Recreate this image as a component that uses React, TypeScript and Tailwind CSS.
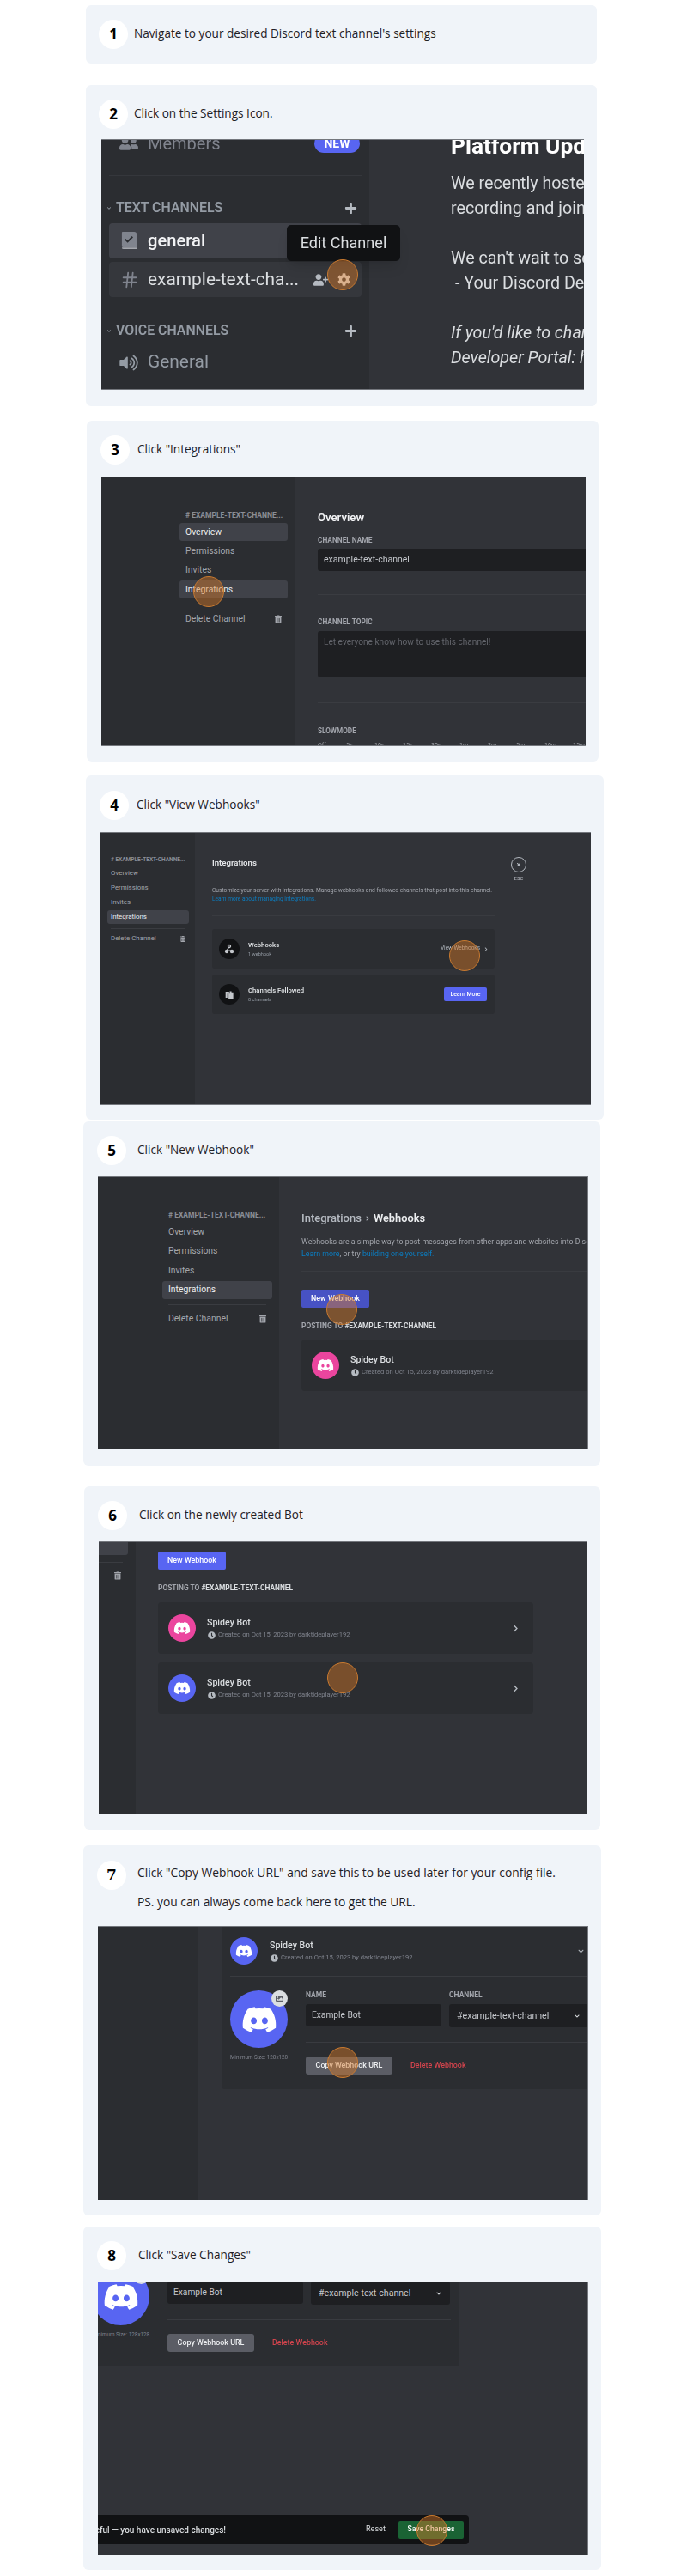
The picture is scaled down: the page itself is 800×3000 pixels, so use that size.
import React from "react";
import { Hash } from "lucide-react";
import { FaDiscord, FaTrashAlt, FaClock, FaCog, FaUserPlus, FaUserFriends, FaVolumeUp, FaChevronDown, FaChevronRight, FaPlus, FaTimes, FaImage } from "react-icons/fa";

const Cursor = ({ pos }: { pos: string }) => (
  <div className={`absolute w-[36px] h-[36px] rounded-full bg-[#d97a28]/45 border border-[#c97a30] ${pos}`} />
);

const Card = ({ cls, children, head }: { cls: string; children?: React.ReactNode; head: React.ReactNode }) => (
  <div className={`rounded-[6px] bg-[#f0f4f9] shrink-0 flex flex-col font-['Open_Sans',sans-serif] ${cls}`}>{head}{children}</div>
);

const Head = ({ cls, num, text, gap }: { cls: string; num: string; text: string; gap: string }) => (
  <div className={`flex items-center ${cls}`}>
    <div className="w-[34px] h-[34px] rounded-full bg-white flex items-center justify-center text-[17px] font-bold text-black shrink-0">{num}</div>
    <p className={`text-[13.62px] leading-[20px] text-[#1f2126] whitespace-nowrap -translate-y-[1px] ${gap}`}>{text}</p>
  </div>
);

const Shot = ({ cls, edge, children }: { cls: string; edge: string; children: React.ReactNode }) => (
  <div className={`relative overflow-hidden bg-[#313338] font-['Roboto',sans-serif] ${cls}`}>
    <div className="blur-[0.5px] h-full w-full flow-root">{children}</div>
    <div className={`absolute inset-0 border-[#74777d] ${edge}`} />
  </div>
);

type MenuS = { wrap: string; head: string; item: string; gap: string; rule: string; del: string; trash: string; active: number; text: string };
const Menu = ({ s }: { s: MenuS }) => (
  <div className={s.wrap}>
    <div className={`${s.head} font-bold text-[#8b8e96] whitespace-nowrap uppercase flex items-center`}># example-text-channe...</div>
    <div className={`flex flex-col ${s.gap}`}>
      {["Overview", "Permissions", "Invites", "Integrations"].map((t, i) => (
        <div key={t} className={`${s.item} ${s.text} flex items-center whitespace-nowrap rounded-[3px] ${i === s.active || (s.active === 0 && i === 3) ? "bg-[#404249] text-[#eceef0]" : "text-[#a3a6ad]"}`}>{t}</div>
      ))}
    </div>
    <div className={`h-px bg-[#3a3c41] ${s.rule}`} />
    <div className={`${s.item} ${s.del} ${s.text} flex items-center justify-between text-[#a3a6ad] whitespace-nowrap`}>
      Delete Channel
      <FaTrashAlt className={s.trash} />
    </div>
  </div>
);

const Avatar = ({ cls, icon }: { cls: string; icon: string }) => (
  <div className={`rounded-full flex items-center justify-center text-white shrink-0 ${cls}`}>
    <FaDiscord className={icon} />
  </div>
);

const Meta = () => (
  <div className="flex items-center gap-[3px] mt-[3px] text-[7.6px] leading-[10px] text-[#80848e] whitespace-nowrap">
    <FaClock className="w-[9px] h-[9px] text-[#b5bac1] ml-[1px]" />
    <span>Created on Oct 15, 2023 by darktideplayer192</span>
  </div>
);

const Hook = ({ cls, color, chevron }: { cls: string; color: string; chevron?: boolean }) => (
  <div className={`h-[60px] rounded-[4px] bg-[#2b2d31] flex items-center pl-[12px] pr-[17px] ${cls}`}>
    <Avatar cls={`w-[32px] h-[32px] ${color}`} icon="w-[20px] h-[20px]" />
    <div className="ml-[13px] flex flex-col flex-1">
      <div className="text-[10.6px] leading-[13px] font-medium text-[#dbdee1]">Spidey Bot</div>
      <Meta />
    </div>
    {chevron && <FaChevronRight className="w-[7px] h-[9px] text-[#b5bac1]" />}
  </div>
);

const Posting = ({ cls }: { cls: string }) => (
  <div className={`text-[8.4px] leading-[10px] font-bold uppercase text-[#a3a6ad] whitespace-nowrap ${cls}`}>
    Posting to <span className="text-[#dbdee1]">#example-text-channel</span>
  </div>
);

const BotCard = ({ cls }: { cls: string }) => (
  <div className={`w-[438px] h-[190px] rounded-[4px] bg-[#2b2d31] px-[10px] shrink-0 ${cls}`}>
    <div className="h-[58px] flex items-center border-b border-[#393b40] box-content">
      <Avatar cls="w-[32px] h-[32px] bg-[#5865f2]" icon="w-[20px] h-[20px]" />
      <div className="ml-[14px] flex flex-col flex-1">
        <div className="text-[10.6px] leading-[13px] font-medium text-[#dbdee1]">Spidey Bot</div>
        <Meta />
      </div>
      <FaChevronDown className="w-[9px] h-[7px] text-[#b5bac1] mr-[5px]" />
    </div>
    <div className="flex mt-[16px]">
      <div className="w-[67px] flex flex-col items-center shrink-0">
        <div className="relative">
          <Avatar cls="w-[67px] h-[67px] bg-[#5865f2]" icon="w-[42px] h-[42px]" />
          <div className="absolute right-0 top-0 w-[19px] h-[19px] rounded-full bg-[#dbdee1] flex items-center justify-center">
            <FaImage className="w-[9px] h-[9px] text-[#5c5e66]" />
          </div>
        </div>
        <div className="mt-[6px] text-[6.3px] leading-[10px] text-[#80848e] whitespace-nowrap">Minimum Size: 128x128</div>
      </div>
      <div className="ml-[21px] flex-1">
        <div className="flex gap-[9px]">
          <div className="w-[158px]">
            <div className="text-[8.5px] leading-[10px] font-bold text-[#a3a6ad]">NAME</div>
            <div className="mt-[6px] h-[26px] bg-[#1e1f22] rounded-[3px] pl-[7px] flex items-center text-[10.2px] text-[#c4c7cc]">Example Bot</div>
          </div>
          <div className="w-[162px]">
            <div className="text-[8.5px] leading-[10px] font-bold text-[#a3a6ad]">CHANNEL</div>
            <div className="mt-[6px] h-[27px] bg-[#1e1f22] rounded-[3px] pl-[9px] pr-[9px] flex items-center justify-between text-[10.6px] text-[#c4c7cc]">
              #example-text-channel
              <FaChevronDown className="w-[8px] h-[6px] text-[#dbdee1]" />
            </div>
          </div>
        </div>
        <div className="mt-[17px] h-px bg-[#393b40]" />
        <div className="mt-[16px] flex items-center">
          <div className="w-[101px] h-[21px] rounded-[3px] bg-[#5b5d65] flex items-center justify-center text-[8.9px] font-medium text-[#eceef0] whitespace-nowrap">Copy Webhook URL</div>
          <div className="ml-[21px] text-[8.9px] font-medium text-[#d2444d] whitespace-nowrap">Delete Webhook</div>
        </div>
      </div>
    </div>
  </div>
);

const Section = ({ text }: { text: string }) => (
  <div className="h-[20px] mx-[6px] flex items-center text-[#949ba4]">
    <FaChevronDown className="w-[6px] h-[5px]" />
    <span className="ml-[5px] text-[15.9px] font-semibold whitespace-nowrap flex-1">{text}</span>
    <FaPlus className="w-[15px] h-[15px] mr-[8px] text-[#b5bac1]" />
  </div>
);

export default function App() {
  return (
    <div className="flex flex-col w-[800px] h-[3000px] bg-white">
      <Card cls="mt-[6px] ml-[100px] w-[595px] h-[68px]" head={<Head cls="mt-[17px] ml-[15px]" num="1" text="Navigate to your desired Discord text channel's settings" gap="ml-[7px]" />} />

      <Card cls="mt-[25px] ml-[100px] w-[595px] h-[374px]" head={<Head cls="mt-[17px] ml-[15px]" num="2" text="Click on the Settings Icon." gap="ml-[7px]" />}>
        <Shot edge="border-t border-b" cls="mt-[12px] ml-[18px] w-[562px] h-[292px] flex">
          <div className="flex h-full">
            <div className="w-[312px] h-full bg-[#2b2d31] shrink-0 flex flex-col">
              <div className="-mt-[6px] h-[22px] ml-[21px] mr-[11px] flex items-center text-[#80848e] shrink-0">
                <FaUserFriends className="w-[22px] h-[20px]" />
                <span className="ml-[11px] text-[20px] flex-1">Members</span>
                <span className="w-[53px] h-[22px] rounded-full bg-[#5865f2] text-white text-[14px] font-bold flex items-center justify-center">NEW</span>
              </div>
              <div className="mt-[26px] mx-[9px] h-px bg-[#35373c] shrink-0" />
              <div className="mt-[27px] shrink-0"><Section text="TEXT CHANNELS" /></div>
              <div className="mt-[8px] mx-[9px] h-[41px] rounded-[4px] bg-[#404249] flex items-center pl-[13px] text-[#f2f3f5] shrink-0">
                <svg viewBox="0 0 22 24" className="w-[21px] h-[23px]">
                  <path d="M3 1h14a3 3 0 0 1 3 3v16H4a2 2 0 0 1-2-2V2a1 1 0 0 1 1-1z" fill="#80848e" />
                  <path d="M2 20h18v2H4a2 2 0 0 1-2-2z" fill="#a3a6ad" />
                  <path d="M6 10l3 3 6-6" fill="none" stroke="#2b2d31" strokeWidth="2" />
                </svg>
                <span className="ml-[11px] text-[20.2px] font-medium">general</span>
              </div>
              <div className="mt-[4px] mx-[9px] h-[41px] rounded-[4px] bg-[#35373c] flex items-center pl-[13px] text-[#dbdee1] shrink-0">
                <Hash className="w-[22px] h-[24px] text-[#80848e]" strokeWidth={2} />
                <span className="ml-[10px] text-[20.9px] whitespace-nowrap w-[180px]">example-text-cha...</span>
                <FaUserPlus className="w-[17px] h-[16px] ml-[13px] text-[#b5bac1]" />
                <FaCog className="w-[15px] h-[15px] ml-[11px] text-[#dbdee1]" />
              </div>
              <div className="mt-[29px] shrink-0"><Section text="VOICE CHANNELS" /></div>
              <div className="mt-[12px] h-[30px] ml-[21px] flex items-center text-[#949ba4] shrink-0">
                <FaVolumeUp className="w-[22px] h-[19px]" />
                <span className="ml-[11px] text-[20.9px]">General</span>
              </div>
            </div>
            <div className="flex-1 pl-[95px] whitespace-nowrap text-[19.7px] leading-[29px] text-[#dbdee1]">
              <div className="-mt-[6px] h-[29px] text-[26.3px] font-bold text-white">Platform Updates</div>
              <div className="mt-[14px] h-[29px]">We recently hosted a</div>
              <div className="h-[29px]">recording and joining</div>
              <div className="mt-[29px] h-[29px]">We can't wait to see</div>
              <div className="h-[29px]">&nbsp;- Your Discord Dev</div>
              <div className="mt-[29px] h-[29px] italic">If you'd like to change</div>
              <div className="h-[29px] italic">Developer Portal: here</div>
            </div>
          </div>
          <div className="absolute left-[216px] top-[100px] w-[132px] h-[42px] rounded-[5px] bg-[#111214] flex items-center justify-center text-[18.1px] text-[#dbdee1] shadow-lg">Edit Channel</div>
          <Cursor pos="left-[263px] top-[140px]" />
        </Shot>
      </Card>

      <Card cls="mt-[17px] ml-[101px] w-[596px] h-[397px]" head={<Head cls="mt-[17px] ml-[16px]" num="3" text={'Click "Integrations"'} gap="ml-[9px]" />}>
        <Shot edge="border-t border-b" cls="mt-[14px] ml-[17px] w-[564px] h-[314px]">
          <div className="flex h-full">
            <div className="w-[226px] h-full bg-[#2b2d31] shrink-0 pl-[91px] pr-[9px] pt-[39px]">
              <Menu s={{ wrap: "w-[126px]", head: "h-[12px] pl-[7px] text-[8.5px]", item: "h-[21px] px-[7px]", gap: "mt-[3px] gap-[1.4px]", rule: "mt-[7px] mx-[7px]", del: "mt-[5px]", trash: "w-[8px] h-[10px]", active: 0, text: "text-[10.4px]" }} />
            </div>
            <div className="flex-1 pl-[26px] whitespace-nowrap">
              <div className="mt-[40px] h-[16px] text-[13.1px] leading-[16px] font-semibold text-[#f2f3f5]">Overview</div>
              <div className="mt-[13px] h-[10px] text-[8.3px] leading-[10px] font-bold text-[#a3a6ad]">CHANNEL NAME</div>
              <div className="mt-[5px] h-[26px] bg-[#1e1f22] rounded-l-[3px] pl-[7px] flex items-center text-[10.5px] text-[#c4c7cc]">example-text-channel</div>
              <div className="mt-[27px] h-px bg-[#3a3c41]" />
              <div className="mt-[26px] h-[10px] text-[8.3px] leading-[10px] font-bold text-[#a3a6ad]">CHANNEL TOPIC</div>
              <div className="mt-[6px] h-[54px] bg-[#1e1f22] rounded-l-[3px] pl-[7px] pt-[6px] text-[10.1px] leading-[14px] text-[#63656c]">Let everyone know how to use this channel!</div>
              <div className="mt-[29px] h-px bg-[#3a3c41]" />
              <div className="mt-[27px] h-[10px] text-[8.2px] leading-[10px] font-bold text-[#a3a6ad]">SLOWMODE</div>
              <div className="mt-[7px] flex text-[7px] leading-[10px] text-[#a3a6ad]">
                {["Off", "5s", "10s", "15s", "30s", "1m", "2m", "5m", "10m", "15m"].map((t) => (
                  <span key={t} className="w-[33px] shrink-0">{t}</span>
                ))}
              </div>
            </div>
          </div>
          <Cursor pos="left-[107px] top-[116px]" />
        </Shot>
      </Card>

      <Card cls="mt-[16px] ml-[100px] w-[603px] h-[401px]" head={<Head cls="mt-[18px] ml-[16px]" num="4" text={'Click "View Webhooks"'} gap="ml-[9px]" />}>
        <Shot edge="border-t border-b" cls="mt-[14px] ml-[17px] w-[571px] h-[318px]">
          <div className="flex h-full">
            <div className="w-[110px] h-full bg-[#2b2d31] shrink-0 pl-[8px] pt-[28px]">
              <Menu s={{ wrap: "w-[95px]", head: "h-[9px] pl-[4px] text-[6.5px]", item: "h-[16px] px-[4px]", gap: "mt-[3px] gap-[1px]", rule: "mt-[5px] mx-[4px]", del: "mt-[3px]", trash: "w-[6px] h-[7px]", active: 3, text: "text-[7.9px]" }} />
            </div>
            <div className="flex-1 pl-[20px] flex">
              <div className="w-[329px] shrink-0">
                <div className="mt-[29px] h-[14px] text-[9.6px] leading-[14px] font-semibold text-[#e4e6e9]">Integrations</div>
                <div className="mt-[20px] text-[6.7px] leading-[10px] text-[#a3a6ad] whitespace-nowrap">Customize your server with integrations. Manage webhooks and followed channels that post into this channel.</div>
                <div className="text-[6.6px] leading-[10px] text-[#0a7fc4] whitespace-nowrap">Learn more about managing integrations.</div>
                <div className="mt-[14px] h-px bg-[#393b40]" />
                <div className="mt-[15px] h-[46px] rounded-[3px] bg-[#2b2d31] flex items-center pl-[8px] pr-[8px]">
                  <div className="w-[24px] h-[24px] rounded-full bg-[#111214] flex items-center justify-center">
                    <svg viewBox="0 0 16 16" className="w-[12px] h-[12px]" fill="none" stroke="#c4c7cc" strokeWidth="1.8"><circle cx="8" cy="4" r="2" /><circle cx="4" cy="12" r="2" fill="#c4c7cc" /><circle cx="12" cy="12" r="2" fill="#c4c7cc" /><path d="M7 6l-3 5h8" /></svg>
                  </div>
                  <div className="ml-[10px] flex-1">
                    <div className="text-[7.7px] leading-[11px] font-semibold text-[#dbdee1]">Webhooks</div>
                    <div className="text-[5.6px] leading-[9px] mt-[1px] text-[#949ba4]">1 webhook</div>
                  </div>
                  <span className="text-[6.5px] text-[#b5bac1] whitespace-nowrap">View Webhooks</span>
                  <FaChevronRight className="ml-[5px] w-[4px] h-[5px] text-[#b5bac1]" />
                </div>
                <div className="mt-[7px] h-[46px] rounded-[3px] bg-[#2b2d31] flex items-center pl-[8px] pr-[9px]">
                  <div className="w-[24px] h-[24px] rounded-full bg-[#111214] flex items-center justify-center">
                    <svg viewBox="0 0 16 16" className="w-[11px] h-[11px]" fill="#c4c7cc"><path d="M1 3h6v3H4v7H1zM8 2h3v2h3v11H6V6h2z" /></svg>
                  </div>
                  <div className="ml-[10px] flex-1">
                    <div className="text-[7.7px] leading-[11px] font-semibold text-[#dbdee1]">Channels Followed</div>
                    <div className="text-[5.6px] leading-[9px] mt-[1px] text-[#949ba4]">0 channels</div>
                  </div>
                  <div className="w-[50px] h-[16px] rounded-[2px] bg-[#5865f2] flex items-center justify-center text-[6.9px] font-medium text-white whitespace-nowrap">Learn More</div>
                </div>
              </div>
              <div className="ml-[19px] mt-[29px] flex flex-col items-center w-[18px]">
                <div className="w-[18px] h-[18px] rounded-full border border-[#b5bac1] flex items-center justify-center">
                  <FaTimes className="w-[6px] h-[6px] text-[#b5bac1]" />
                </div>
                <div className="mt-[3px] text-[6px] leading-[8px] font-semibold text-[#a3a6ad]">ESC</div>
              </div>
            </div>
          </div>
          <Cursor pos="left-[406px] top-[126px]" />
        </Shot>
      </Card>

      <Card cls="mt-[2px] ml-[97px] w-[602px] h-[401px]" head={<Head cls="mt-[17px] ml-[16px]" num="5" text={'Click "New Webhook"'} gap="ml-[13px]" />}>
        <Shot edge="border-t border-b border-r" cls="mt-[13px] ml-[17px] w-[571px] h-[318px]">
          <div className="flex h-full">
            <div className="w-[211px] h-full bg-[#2b2d31] shrink-0 pl-[75px] pt-[39px]">
              <Menu s={{ wrap: "w-[128px]", head: "h-[12px] pl-[7px] text-[8.5px]", item: "h-[21px] px-[7px]", gap: "mt-[3px] gap-[1.5px]", rule: "mt-[6px] mx-[7px]", del: "mt-[6px]", trash: "w-[8px] h-[10px]", active: 3, text: "text-[10.4px]" }} />
            </div>
            <div className="flex-1 pl-[26px] whitespace-nowrap overflow-hidden">
              <div className="mt-[41px] h-[16px] text-[13px] leading-[16px] flex items-center font-medium text-[#b5bac1]">
                Integrations <FaChevronRight className="mx-[5px] w-[4px] h-[6px]" />
                <span className="font-semibold text-[12.8px] text-[#eceef0]">Webhooks</span>
              </div>
              <div className="mt-[12px] text-[8.8px] leading-[14px] text-[#a3a6ad]">Webhooks are a simple way to post messages from other apps and websites into Discord using the magic</div>
              <div className="text-[8.8px] leading-[14px] text-[#a3a6ad]"><span className="text-[#0a7fc4]">Learn more</span>, or try <span className="text-[#0a7fc4]">building one yourself.</span></div>
              <div className="mt-[13px] h-px bg-[#393b40]" />
              <div className="mt-[21px] w-[79px] h-[21px] rounded-[2px] bg-[#4752c4] flex items-center justify-center text-[8.9px] font-medium text-white">New Webhook</div>
              <Posting cls="mt-[16px]" />
              <Hook cls="mt-[11px] w-[360px]" color="bg-[#eb459e]" />
            </div>
          </div>
          <Cursor pos="left-[266px] top-[137px]" />
        </Shot>
      </Card>

      <Card cls="mt-[24px] ml-[98px] w-[601px] h-[400px]" head={<Head cls="mt-[17px] ml-[16px]" num="6" text="Click on the newly created Bot" gap="ml-[14px]" />}>
        <Shot edge="border-t border-b" cls="mt-[13px] ml-[17px] w-[569px] h-[318px]">
          <div className="flex h-full">
            <div className="w-[43px] h-full bg-[#2b2d31] shrink-0">
              <div className="w-[34px] h-[16px] bg-[#404249] rounded-br-[3px]" />
              <div className="mt-[8px] w-[28px] h-px bg-[#3a3c41]" />
              <FaTrashAlt className="mt-[10px] ml-[18px] w-[8px] h-[10px] text-[#a3a6ad]" />
            </div>
            <div className="flex-1 pl-[26px] pr-[63px]">
              <div className="mt-[12px] w-[79px] h-[21px] rounded-[2px] bg-[#5865f2] flex items-center justify-center text-[8.9px] font-medium text-white">New Webhook</div>
              <Posting cls="mt-[16px]" />
              <Hook cls="mt-[12px]" color="bg-[#eb459e]" chevron />
              <Hook cls="mt-[10px]" color="bg-[#5865f2]" chevron />
            </div>
          </div>
          <Cursor pos="left-[266px] top-[141px]" />
        </Shot>
      </Card>

      <Card cls="mt-[18px] ml-[97px] w-[603px] h-[431px]" head={
        <div className="mt-[18px] ml-[16px] flex items-start">
          <div className="w-[34px] h-[34px] rounded-full bg-white flex items-center justify-center text-[17px] font-bold text-black shrink-0 font-['DejaVu_Serif',serif]">7</div>
          <div className="ml-[13px] text-[13.8px] leading-[34px] text-[#1f2126] whitespace-nowrap -mt-[3px]">
            <p>Click "Copy Webhook URL" and save this to be used later for your config file.</p>
            <p>PS. you can always come back here to get the URL.</p>
          </div>
        </div>
      }>
        <Shot edge="border-t border-r" cls="mt-[11px] ml-[17px] w-[571px] h-[319px]">
          <div className="flex h-full">
            <div className="w-[116px] h-full bg-[#2b2d31] shrink-0" />
            <BotCard cls="ml-[28px]" />
          </div>
          <Cursor pos="left-[267px] top-[141px]" />
        </Shot>
      </Card>

      <Card cls="mt-[13px] ml-[97px] w-[603px] h-[400px]" head={<Head cls="mt-[17px] ml-[16px]" num="8" text={'Click "Save Changes"'} gap="ml-[14px]" />}>
        <Shot edge="border-b border-r" cls="mt-[14px] ml-[17px] w-[571px] h-[318px]">
          <div className="-mt-[92px] flex flex-col">
            <BotCard cls="-ml-[17px]" />
            <div className="mt-[173px] w-[432px] h-[34px] rounded-r-[4px] bg-[#111214] flex items-center whitespace-nowrap">
              <div className="w-[149px] flex justify-end overflow-hidden text-[10px] font-medium text-[#dbdee1] shrink-0">
                <span className="shrink-0">Careful — you have unsaved changes!</span>
              </div>
              <span className="ml-[163px] text-[9.1px] text-[#dbdee1]">Reset</span>
              <div className="ml-[15px] w-[76px] h-[21px] rounded-[2px] bg-[#1a6334] flex items-center justify-center text-[8.7px] font-medium text-white">Save Changes</div>
            </div>
          </div>
          <Cursor pos="left-[371px] top-[271px]" />
        </Shot>
      </Card>
    </div>
  );
}
